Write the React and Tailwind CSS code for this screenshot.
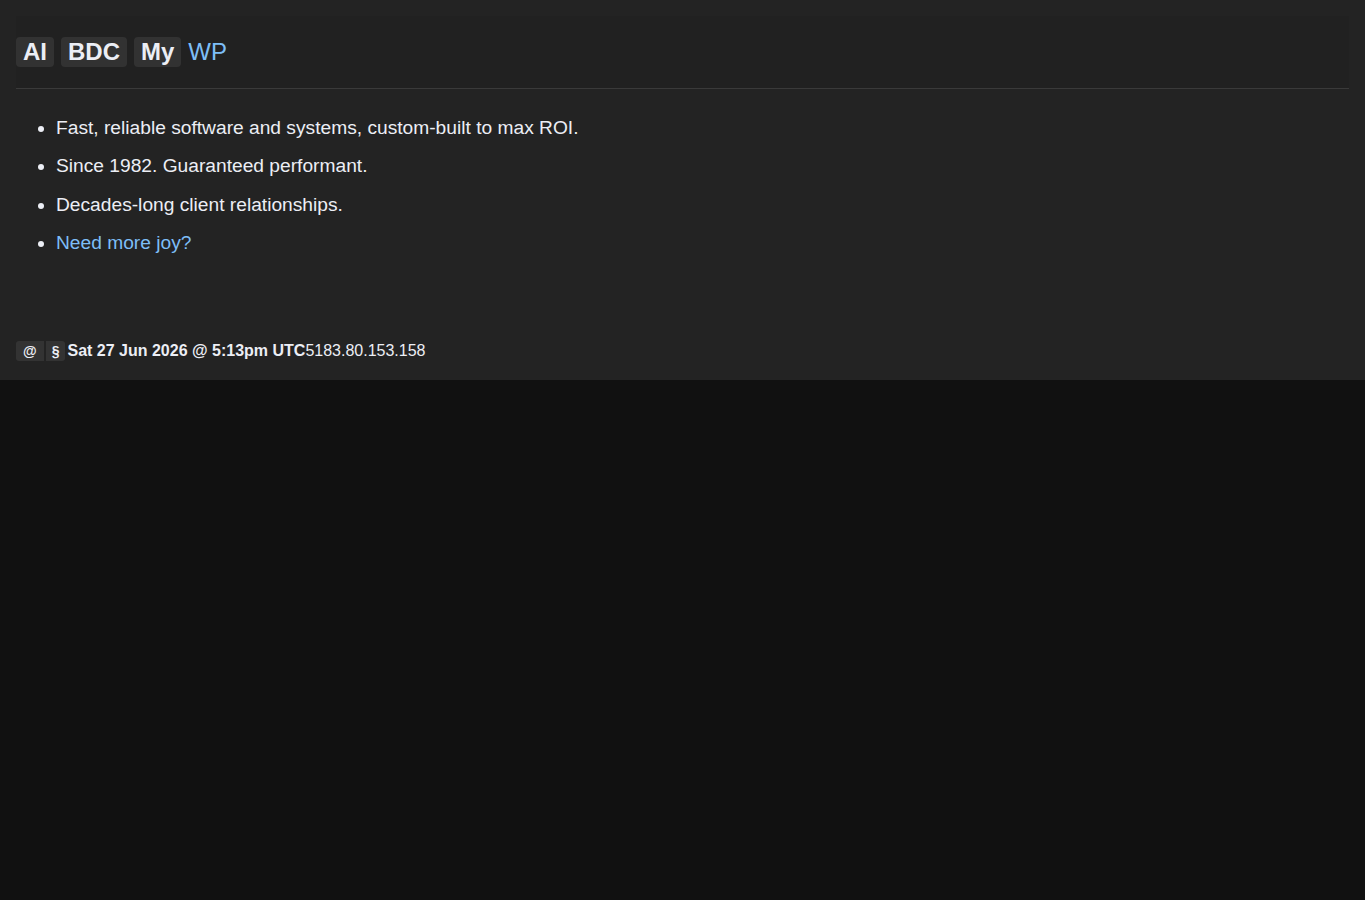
export default function App() {
  const points = [
    'Fast, reliable software and systems, custom-built to max ROI.',
    'Since 1982. Guaranteed performant.',
    'Decades-long client relationships.',
  ];

  return (
    <div className="min-h-screen bg-[#111111] font-['Liberation_Sans',Arial,sans-serif] text-[#eceef5]">
      <section className="bg-[#232323] pt-4 pb-[19px]">
        {/* Brand bar */}
        <header className="mx-4 flex h-[73px] items-center gap-[7px] border-b border-[#3a3a3a] bg-[#212121]">
          <span className="rounded-[4px] bg-[#323232] px-[7px] text-[24px] font-bold leading-[30px]">AI</span>
          <span className="rounded-[4px] bg-[#323232] px-[7px] text-[24px] font-bold leading-[30px]">BDC</span>
          <span className="rounded-[4px] bg-[#323232] px-[7px] text-[24px] font-bold leading-[30px]">My</span>
          <a href="#" className="text-[24px] leading-[30px] text-[#7dbef7]">WP</a>
        </header>

        <ul className="mt-[20px] list-disc pl-[56px] text-[19.2px] leading-[38.4px]">
          {points.map((p) => (
            <li key={p}>{p}</li>
          ))}
          <li>
            <a href="#" className="text-[#7dbef7]">Need more joy?</a>
          </li>
        </ul>

        {/* Status line */}
        <footer className="mx-4 mt-[78px] flex items-center text-[16px] leading-[20px]">
          <span className="rounded-l-[3px] bg-[#333333] px-[7px] text-[14px] font-bold">@</span>
          <span className="ml-[2px] rounded-r-[3px] bg-[#333333] px-[6px] text-[14px] font-bold">§</span>
          <b className="ml-[2px]">Sat 27 Jun 2026 @ 5:13pm UTC</b>
          <span>5183.80.153.158</span>
        </footer>
      </section>
    </div>
  );
}
